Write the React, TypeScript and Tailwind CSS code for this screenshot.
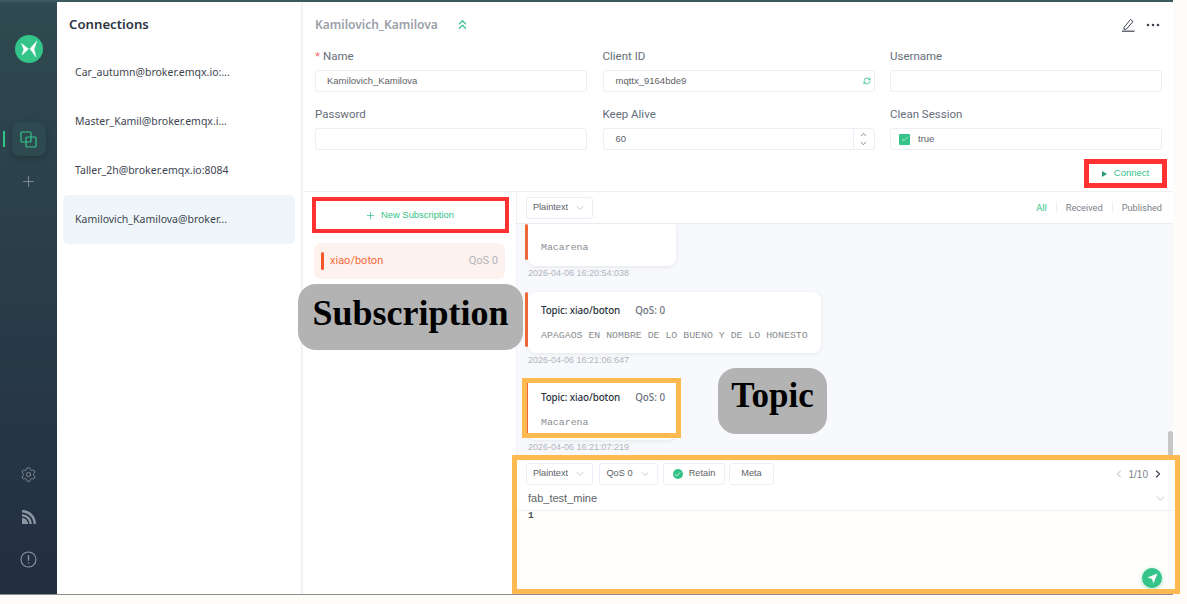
import React from "react";
import { ChevronDown, ChevronLeft, ChevronRight, ChevronUp, ChevronsUp, Plus, Settings, RefreshCw, Check } from "lucide-react";

const ui = { fontFamily: 'Roboto, "Noto Sans", sans-serif' };
const head = { fontFamily: '"Noto Sans", "Liberation Sans", sans-serif' };
const arial = { fontFamily: '"Liberation Sans", Arial, sans-serif' };
const mono = { fontFamily: '"Liberation Mono", monospace' };
const serif = { fontFamily: '"Liberation Serif", serif' };

function Logo() {
  return (
    <svg width="28" height="28" viewBox="0 0 28 28">
      <circle cx="14" cy="14" r="14" fill="#34c388" />
      <path d="M6.5 8.5 L13.5 14 L7 20 L8.8 14.3 Z" fill="#fff" stroke="#fff" strokeWidth="0.5" strokeLinejoin="round" />
      <path d="M21.8 6 L15 13.8 L21 22 L19 14.2 Z" fill="#fff" stroke="#fff" strokeWidth="0.5" strokeLinejoin="round" />
    </svg>
  );
}

function Field({ label, required, children }: { label: string; required?: boolean; children: React.ReactNode }) {
  return (
    <div className="flex flex-col">
      <div className="h-[27px] text-[11.5px] leading-[26px] text-[#666e7a]" style={ui}>
        {required && <span className="text-[#f56c6c] mr-[3px]">*</span>}
        {label}
      </div>
      {children}
    </div>
  );
}

function Box({ children, className = "" }: { children?: React.ReactNode; className?: string }) {
  return (
    <div className={`h-[22px] border border-[#ebeef5] rounded-[3px] bg-white flex items-center text-[9.5px] text-[#606266] ${className}`} style={arial}>
      {children}
    </div>
  );
}

function Pill({ children, className = "" }: { children: React.ReactNode; className?: string }) {
  return (
    <div className={`h-[22px] border border-[#ebeef5] rounded-[3px] bg-white flex items-center justify-center text-[9.2px] text-[#606266] ${className}`} style={arial}>
      {children}
    </div>
  );
}

function Message({ body, wide, cut }: { body: string; wide?: boolean; cut?: boolean }) {
  return (
    <div className="flex items-start">
      <div className={`w-[3px] shrink-0 bg-[#f4693a] rounded-[2px] ${cut ? "h-[36px]" : "h-[55px]"}`} />
      <div
        className={`bg-white rounded-[8px] shadow-[0_1px_4px_rgba(0,0,0,0.08)] pl-[13px] ${cut ? "rounded-t-none h-[42px] pt-[18px]" : "h-[61px] pt-[13px]"} ${wide ? "w-[293px]" : "w-[148px]"}`}
      >
        {!cut && (
          <div className="flex items-center h-[12px] text-[9.8px] font-medium" style={head}>
            <span className="text-[#2c3542] tracking-[-0.1px]">Topic: xiao/boton</span>
            <span className="ml-[15px] text-[#6b7280]">QoS: 0</span>
          </div>
        )}
        <div className={`text-[9.9px] leading-[12px] text-[#8a8d91] whitespace-nowrap ${cut ? "" : "mt-[13px]"}`} style={mono}>
          {body}
        </div>
      </div>
    </div>
  );
}

function Stamp({ t }: { t: string }) {
  return <div className="h-[14px] text-[9px] leading-[14px] pl-[3px] text-[#b0b4bb]" style={arial}>{t}</div>;
}

function Tag({ children, className }: { children: React.ReactNode; className: string }) {
  return (
    <div className={`absolute bg-[#b3b3b3] rounded-[18px] flex items-center justify-center font-bold text-black pb-[9px] ${className}`} style={serif}>
      {children}
    </div>
  );
}

export default function App() {
  return (
    <div className="relative w-[1187px] h-[604px] overflow-hidden bg-[#fdfcf8] flex flex-col">
      <div className="h-[2px] w-[1173px] bg-[#3b5a60]" />
      <div className="flex w-[1173px] h-[593px] bg-white border-b border-[#8f8f8f]">
        {/* rail */}
        <div className="w-[57px] shrink-0 flex flex-col items-center bg-gradient-to-b from-[#2f4a50] to-[#232e40]">
          <div className="mt-[33px] h-[28px]"><Logo /></div>
          <div className="relative mt-[59px] w-[34px] h-[34px] rounded-[8px] bg-[#2e4a50] shadow-[0_2px_6px_rgba(0,0,0,0.2)] flex items-center justify-center">
            <span className="absolute left-[-9px] top-[9px] w-[2px] h-[16px] bg-[#34c388]" />
            <svg width="17" height="17" viewBox="0 0 17 17" fill="none" stroke="#34c388" strokeWidth="1.2">
              <rect x="1" y="1" width="10" height="10" rx="1" />
              <rect x="6" y="6" width="10" height="10" rx="1" />
            </svg>
          </div>
          <Plus className="mt-[17px] text-[#8a9a9e]" size={17} strokeWidth={1.2} />
          <div className="mt-auto flex flex-col items-center">
            <Settings className="text-[#8a96a1]" size={17} strokeWidth={1.2} />
            <svg className="mt-[27px]" width="14" height="14" viewBox="0 0 14 14" fill="#8a96a1">
              <path d="M0 0 C8 0 14 6 14 14 H11.6 C11.6 7.6 6.4 2.4 0 2.4 Z" />
              <path d="M0 4.2 C5.4 4.2 9.8 8.6 9.8 14 H7.4 C7.4 9.9 4.1 6.6 0 6.6 Z" />
              <path d="M0 8 C3.3 8 6 10.7 6 14 H0 Z" />
            </svg>
            <svg className="mt-[27px] mb-[26px]" width="17" height="17" viewBox="0 0 17 17" fill="none" stroke="#8a96a1" strokeWidth="1.1">
              <circle cx="8.5" cy="8.5" r="7.5" />
              <path d="M8.5 4.2 V9.8 M8.5 11.6 V12.8" strokeWidth="1.3" />
            </svg>
          </div>
        </div>

        {/* connections */}
        <div className="w-[245px] shrink-0 bg-white px-[6px] pt-[12px] shadow-[inset_-1px_0_0_#eef0f5]" style={head}>
          <div className="h-[21px] pl-[6px] text-[13.2px] leading-[21px] font-semibold text-[#2c3542]">Connections</div>
          <div className="mt-[13px] flex flex-col text-[#3d4450] text-[10.5px]">
            {["Car_autumn@broker.emqx.io:...", "Master_Kamil@broker.emqx.i...", "Taller_2h@broker.emqx.io:8084", "Kamilovich_Kamilova@broker..."].map((c, i) => (
              <div key={c} className={`h-[49px] w-[232px] rounded-[5px] flex items-center pl-[12px] ${i === 3 ? "bg-[#eff6fa]" : ""}`}>{c}</div>
            ))}
          </div>
        </div>

        {/* main */}
        <div className="flex-1 min-w-0 flex flex-col border-l border-[#f1f3f8]">
          <div className="h-[190px] shrink-0 border-b border-[#eef0f4] pl-[12px] pr-[11px]">
            <div className="h-[41px] pt-[5px] flex items-center">
              <span className="text-[12px] font-semibold text-[#9aa0a8]" style={head}>Kamilovich_Kamilova</span>
              <ChevronsUp className="ml-[17px] mb-[2px] text-[#34c388]" size={15} strokeWidth={2} />
              <svg className="ml-auto" width="14" height="14" viewBox="0 0 14 14" fill="none" stroke="#3d4450" strokeWidth="1">
                <path d="M3 9.5 L9.5 1.5 L12 3.5 L5.5 11 L3 11.5 Z" />
                <path d="M1 13.2 H13.5" strokeWidth="1.2" />
              </svg>
              <svg className="ml-[11px] mr-[2px]" width="14" height="4" viewBox="0 0 14 4" fill="#3d4450">
                <circle cx="2" cy="2" r="1.3" /><circle cx="7" cy="2" r="1.3" /><circle cx="12" cy="2" r="1.3" />
              </svg>
            </div>
            <div className="grid grid-cols-3 gap-x-[15.5px] gap-y-[9px]">
              <Field label="Name" required>
                <Box className="pl-[11px]">Kamilovich_Kamilova</Box>
              </Field>
              <Field label="Client ID">
                <Box className="pl-[12px] pr-[3px] justify-between">
                  mqttx_9164bde9
                  <RefreshCw size={8} strokeWidth={2.4} className="text-[#34c388]" />
                </Box>
              </Field>
              <Field label="Username">
                <Box />
              </Field>
              <Field label="Password">
                <Box />
              </Field>
              <Field label="Keep Alive">
                <Box className="pl-[12px] justify-between">
                  60
                  <div className="w-[21px] h-full border-l border-[#ebeef5] flex flex-col items-center justify-center text-[#606266]">
                    <ChevronUp size={9} />
                    <ChevronDown size={9} />
                  </div>
                </Box>
              </Field>
              <Field label="Clean Session">
                <Box className="pl-[8px]">
                  <span className="w-[11px] h-[11px] rounded-[1px] bg-[#34c388] flex items-center justify-center">
                    <Check size={8} strokeWidth={2} className="text-white" />
                  </span>
                  <span className="ml-[8px]">true</span>
                </Box>
              </Field>
            </div>
            <div className="mt-[14px] flex justify-end">
              <div className="w-[73px] h-[19px] flex items-center justify-center gap-[7px] text-[9.5px] text-[#34c388]" style={arial}>
                <svg width="5" height="6" viewBox="0 0 5 6"><path d="M0 0 L5 3 L0 6 Z" fill="#2a9d70" /></svg>
                Connect
              </div>
            </div>
          </div>

          <div className="flex-1 min-h-0 flex">
            {/* subscriptions */}
            <div className="w-[214px] shrink-0 border-r border-[#eef0f4] flex flex-col px-[11px]">
              <div className="h-[41px] mt-[3px] flex items-center justify-center gap-[5px] text-[9.4px] text-[#34c388]" style={arial}>
                <Plus size={11} strokeWidth={1.6} />
                New Subscription
              </div>
              <div className="mt-[7px] h-[36px] rounded-[7px] bg-[#fef2ef] flex items-center pl-[7px] pr-[7px] text-[11px]" style={ui}>
                <span className="w-[3px] h-[18px] rounded-[2px] bg-[#f4572a]" />
                <span className="ml-[6px] text-[#f4693a]">xiao/boton</span>
                <span className="ml-auto text-[#b0b4bb]">QoS 0</span>
              </div>
            </div>

            {/* messages */}
            <div className="flex-1 min-w-0 flex flex-col">
              <div className="h-[32px] shrink-0 border-b border-[#e9ecf2] flex items-center pl-[9px] pr-[11px]">
                <Pill className="w-[67px] gap-[6px]">Plaintext<ChevronDown size={12} strokeWidth={1.2} className="text-[#a0a4ab]" /></Pill>
                <div className="ml-auto flex items-center text-[9.2px] text-[#7b818a]" style={ui}>
                  <span className="text-[#34c388]">All</span>
                  <span className="ml-[9px] mr-[9px] w-px h-[11px] bg-[#eef0f4]" />
                  <span>Received</span>
                  <span className="ml-[9px] mr-[9px] w-px h-[11px] bg-[#eef0f4]" />
                  <span>Published</span>
                </div>
              </div>
              <div className="relative flex-1 min-h-0 bg-[#f8f9fd] pl-[8px] overflow-hidden">
                <Message body="Macarena" cut />
                <Stamp t="2026-04-06 16:20:54:038" />
                <div className="mt-[12px]"><Message body="APAGAOS EN NOMBRE DE LO BUENO Y DE LO HONESTO" wide /></div>
                <Stamp t="2026-04-06 16:21:06:647" />
                <div className="mt-[12px]"><Message body="Macarena" /></div>
                <Stamp t="2026-04-06 16:21:07:219" />
                <div className="absolute right-0 top-[207px] w-[5px] h-[26px] rounded-[3px] bg-[#c6c6c6]" />
              </div>
              <div className="h-[138px] shrink-0 bg-[#fffefc] flex flex-col">
                <div className="h-[36px] shrink-0 bg-white flex items-center pl-[9px] pr-[9px]">
                  <Pill className="w-[67px] gap-[6px]">Plaintext<ChevronDown size={12} strokeWidth={1.2} className="text-[#a0a4ab]" /></Pill>
                  <Pill className="ml-[6px] w-[59px] gap-[6px]">QoS 0<ChevronDown size={12} strokeWidth={1.2} className="text-[#a0a4ab]" /></Pill>
                  <Pill className="ml-[5px] w-[62px] gap-[6px] border-[#34c388]">
                    <span className="w-[10px] h-[10px] rounded-full bg-[#34c388] flex items-center justify-center"><Check size={7} strokeWidth={2.5} className="text-white" /></span>
                    Retain
                  </Pill>
                  <Pill className="ml-[4px] w-[45px]">Meta</Pill>
                  <div className="ml-auto flex items-center gap-[4px] text-[10px] text-[#7b818a]" style={arial}>
                    <ChevronLeft size={12} className="text-[#b0b4bb]" />
                    1/10
                    <ChevronRight size={12} strokeWidth={2.4} className="text-[#3d4450]" />
                  </div>
                </div>
                <div className="h-[19px] shrink-0 bg-white border-b border-[#eef0f4] flex items-start pl-[11px] pr-[6px] text-[11px] leading-[12px] text-[#606266]" style={arial}>
                  fab_test_mine
                  <ChevronDown size={13} strokeWidth={1.2} className="ml-auto text-[#a0a4ab]" />
                </div>
                <div className="flex-1 relative pl-[11px] text-[9.5px] leading-[10px] font-bold text-[#4a4f57]" style={mono}>
                  1
                  <div className="absolute right-[11px] bottom-[6px] w-[20px] h-[20px] rounded-full bg-[#34c388] shadow-[0_1px_4px_rgba(52,195,136,0.5)] flex items-center justify-center">
                    <svg width="11" height="11" viewBox="0 0 11 11"><path d="M0.5 4.5 L10.5 0.5 L6.5 10.5 L5 6 Z" fill="#fff" /></svg>
                  </div>
                </div>
              </div>
            </div>
          </div>
        </div>
      </div>

      {/* annotations */}
      <div className="absolute left-[312px] top-[197px] w-[197px] h-[36px] border-[4px] border-[#ff3131]" />
      <div className="absolute left-[1084px] top-[159px] w-[83px] h-[29px] border-[5px] border-[#ff3131]" />
      <div className="absolute left-[522px] top-[378px] w-[159px] h-[60px] border-[5px] border-[#ffb951]" />
      <div className="absolute left-[512px] top-[455px] w-[668px] h-[139px] border-[5px] border-[#ffb951]" />
      <Tag className="left-[298px] top-[284px] w-[225px] h-[66px] text-[36px]">Subscription</Tag>
      <Tag className="left-[718px] top-[368px] w-[109px] h-[66px] text-[35px]">Topic</Tag>
    </div>
  );
}
